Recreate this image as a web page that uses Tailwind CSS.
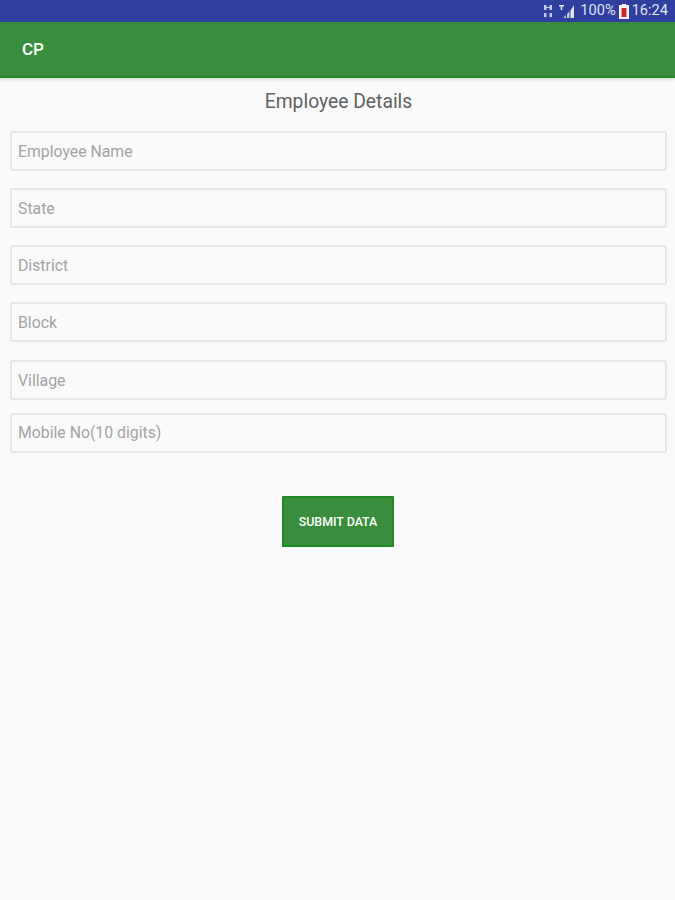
<!DOCTYPE html>
<html>
<head>
<meta charset="utf-8">
<script src="https://cdn.jsdelivr.net/npm/@tailwindcss/browser@4"></script>
</head>
<body class="bg-[#fafafa] font-['Roboto',sans-serif]">
<div class="w-[675px] h-[900px] overflow-hidden flex flex-col">
  <div class="h-[22px] bg-[#303f9f] flex items-center justify-end pr-[7px] text-[14.6px] text-[#dfe3f2]">
    <svg class="w-[8px] h-[14px] mr-[7px]" viewBox="0 0 8 14" fill="#c3cae8"><rect x="0" y="1" width="2.5" height="5"/><rect x="5.5" y="1" width="2.5" height="5"/><rect x="0" y="9" width="2.5" height="4"/><rect x="5.5" y="9" width="2.5" height="4"/><rect x="2" y="3" width="4" height="1"/></svg>
    <svg class="w-[15px] h-[15px] mr-[6px]" viewBox="0 0 15 15" fill="#dfe3f2"><path d="M0 1h5v1.5H3.3V6H1.7V2.5H0z"/><path d="M4 14l3-3v3z" opacity=".75"/><path d="M8 10l2.5-2.5V14H8z" opacity=".85"/><path d="M11.5 6.5L15 1v13h-3.5z"/></svg>
    <span>100%</span>
    <svg class="w-[10px] h-[15px] ml-[3px] mr-[3px]" viewBox="0 0 10 15"><rect x="3" y="0" width="4" height="2" fill="#eee"/><rect x="0" y="1" width="10" height="14" fill="#f4f4f4"/><rect x="2.5" y="4" width="5" height="9" fill="#c62828"/></svg>
    <span>16:24</span>
  </div>
  <div class="h-[56px] bg-[#388e3c] border-b-2 border-[#1f8a24] shadow-[0_2px_3px_rgba(0,0,0,0.12)] flex items-center pl-[22px] pt-[2px] text-white text-[17px] font-medium">CP</div>
  <div class="text-center text-[19.3px] text-[#616161] leading-[24px] mt-[12px] pl-[2px]">Employee Details</div>
  <div class="flex flex-col pl-[10px] pr-[8px] mt-[17px]">
    <div class="h-[40px] border-2 border-[#e6e6e6] rounded-[3px] flex items-center pl-[6px] pt-[2px] text-[15.8px] text-[#a3a3a3]">Employee Name</div>
    <div class="h-[40px] mt-[17px] border-2 border-[#e6e6e6] rounded-[3px] flex items-center pl-[6px] pt-[2px] text-[15.8px] text-[#a3a3a3]">State</div>
    <div class="h-[40px] mt-[17px] border-2 border-[#e6e6e6] rounded-[3px] flex items-center pl-[6px] pt-[2px] text-[15.8px] text-[#a3a3a3]">District</div>
    <div class="h-[40px] mt-[17px] border-2 border-[#e6e6e6] rounded-[3px] flex items-center pl-[6px] pt-[2px] text-[15.8px] text-[#a3a3a3]">Block</div>
    <div class="h-[40px] mt-[18px] border-2 border-[#e6e6e6] rounded-[3px] flex items-center pl-[6px] pt-[2px] text-[15.8px] text-[#a3a3a3]">Village</div>
    <div class="h-[40px] mt-[13px] border-2 border-[#e6e6e6] rounded-[3px] flex items-center pl-[6px] text-[15.8px] text-[#a3a3a3]">Mobile No(10 digits)</div>
  </div>
  <div class="flex justify-center mt-[43px] pl-[1px]">
    <div class="w-[112px] h-[51px] bg-[#388e3c] border-2 border-[#1f8a24] rounded-[1px] flex items-center justify-center pt-[2px] text-white text-[12.4px] font-medium">SUBMIT DATA</div>
  </div>
</div>
</body>
</html>
